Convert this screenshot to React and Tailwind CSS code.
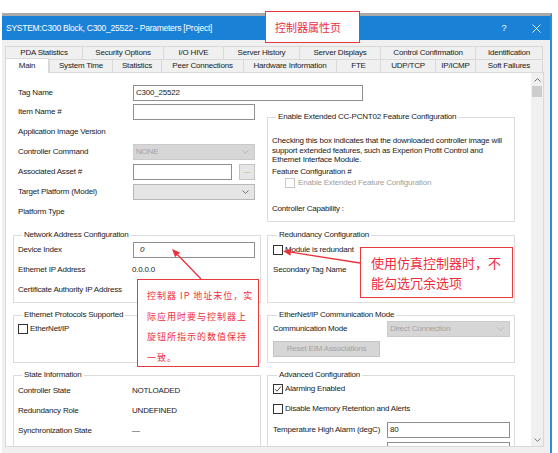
import React from "react";

const Chevron = ({ color = "#a8a8a8" }) => (
  <svg width="7" height="4" viewBox="0 0 7 4" style={{ color }}>
    <path d="M0.5 0.5 L3.5 3.4 L6.5 0.5" fill="none" stroke="currentColor" strokeWidth="0.8" />
  </svg>
);

const ChevronUp = ({ color = "#606060" }) => (
  <svg width="7" height="4" viewBox="0 0 7 4" style={{ color }}>
    <path d="M0.5 3.5 L3.5 0.6 L6.5 3.5" fill="none" stroke="currentColor" strokeWidth="0.9" />
  </svg>
);

function Group({ title, className, children }) {
  return (
    <div className={`border border-[#dcdcdc] ${className}`}>
      <div className="-mt-[6px] ml-[4px] px-[2px] w-fit bg-white leading-[10px] h-[10px] whitespace-nowrap">
        {title}
      </div>
      {children}
    </div>
  );
}

function Box({ w, children, italic }) {
  return (
    <div
      className={`${w} h-[16px] border border-[#8f8f8f] bg-white flex items-center pl-[2px] whitespace-nowrap ${
        italic ? "italic" : ""
      }`}
    >
      {children}
    </div>
  );
}

function Check({ checked, disabled }) {
  return (
    <div
      className={`w-[10px] h-[10px] border bg-white shrink-0 flex items-center justify-center ${
        disabled ? "border-[#c8c8c8]" : "border-[#333333]"
      }`}
    >
      {checked && (
        <svg width="8" height="8" viewBox="0 0 8 8">
          <path d="M1 4.2 L3 6.2 L7 1.5" fill="none" stroke="#333" strokeWidth="0.9" />
        </svg>
      )}
    </div>
  );
}

function Tab({ w, children, last }) {
  return (
    <div
      className={`${w} shrink-0 h-full border-t border-l border-[#d9d9d9] bg-[#f0f0f0] flex items-center justify-center whitespace-nowrap ${
        last ? "border-r" : ""
      }`}
    >
      {children}
    </div>
  );
}

export default function App() {
  return (
    <div className="w-[558px] h-[453px] bg-white relative overflow-hidden font-['Liberation_Sans',Arial,sans-serif] text-[8px] tracking-[-0.2px] text-[#1a1a1a] leading-none">
      <div className="h-[13px]" />
      {/* window */}
      <div className="ml-[2px] w-[550px] h-[440px] border-t-[3px] border-t-[#a9a9a9] border-r-[2px] border-r-[#2a8de0] bg-[#f0f0f0] flex flex-col">
        {/* title bar */}
        <div className="h-[24px] shrink-0 bg-[#1a82d6] flex items-center pl-[4px] text-white">
          <div className="flex-1 text-[8.5px] tracking-[-0.25px] whitespace-nowrap">
            SYSTEM:C300 Block, C300_25522 - Parameters [Project]
          </div>
          <div className="w-[16px] text-center text-[9px]">?</div>
          <div className="w-[16px] ml-[16px] mr-[6px] flex items-center justify-center">
            <svg width="9" height="9" viewBox="0 0 9 9">
              <path d="M0.5 0.5 L8.5 8.5 M8.5 0.5 L0.5 8.5" stroke="white" strokeWidth="0.9" />
            </svg>
          </div>
        </div>

        {/* tab control */}
        <div className="pl-[3px] mt-[6px] flex flex-col flex-1">
          <div className="h-[13px] flex">
            <Tab w="w-[77px]">PDA Statistics</Tab>
            <Tab w="w-[81px]">Security Options</Tab>
            <Tab w="w-[60px]">I/O HIVE</Tab>
            <Tab w="w-[76px]">Server History</Tab>
            <Tab w="w-[81px]">Server Displays</Tab>
            <Tab w="w-[95px]">Control Confirmation</Tab>
            <Tab w="w-[68px]" last>
              Identification
            </Tab>
          </div>
          <div className="h-[13px] flex">
            <div className="w-[44px] shrink-0 -mt-[1px] -mb-[1px] relative z-10 bg-white border-t border-l border-r border-[#d9d9d9] flex items-center justify-center">
              Main
            </div>
            <Tab w="w-[63px]">System Time</Tab>
            <Tab w="w-[49px]">Statistics</Tab>
            <Tab w="w-[82px]">Peer Connections</Tab>
            <Tab w="w-[93px]">Hardware Information</Tab>
            <Tab w="w-[44px]">FTE</Tab>
            <Tab w="w-[55px]">UDP/TCP</Tab>
            <Tab w="w-[40px]">IP/ICMP</Tab>
            <Tab w="w-[68px]" last>
              Soft Failures
            </Tab>
          </div>

          {/* tab page */}
          <div className="w-[539px] h-[375px] border border-[#d9d9d9] bg-white flex overflow-hidden">
            <div className="flex-1 overflow-hidden pl-[7px] pt-[10px]">
              {/* Tag Name */}
              <div className="h-[19px] flex items-center pl-[5px]">
                <div className="w-[115px] shrink-0">Tag Name</div>
                <Box w="w-[230px]">C300_25522</Box>
              </div>

              <div className="grid grid-cols-[248px_248px] gap-x-[6px] gap-y-[12px]">
                {/* Row A left */}
                <div className="pl-[5px] mb-[1px]">
                  <div className="h-[20px] flex items-center">
                    <div className="w-[115px] shrink-0">Item Name #</div>
                    <Box w="w-[122px]" />
                  </div>
                  <div className="h-[20px] flex items-center">Application Image Version</div>
                  <div className="h-[20px] flex items-center">
                    <div className="w-[115px] shrink-0">Controller Command</div>
                    <div className="w-[122px] h-[16px] bg-[#d6d6d6] border border-[#cacaca] flex items-center justify-between pl-[2px] pr-[5px] text-[#a3a3a3]">
                      <span>NONE</span>
                      <Chevron color="#b4b4b4" />
                    </div>
                  </div>
                  <div className="h-[20px] flex items-center">
                    <div className="w-[115px] shrink-0">Associated Asset #</div>
                    <Box w="w-[99px]" />
                    <div className="ml-[7px] w-[16px] h-[16px] bg-[#e6e6e6] border border-[#c4c4c4] flex items-center justify-center text-[#8a8a8a] pb-[3px]">
                      ...
                    </div>
                  </div>
                  <div className="h-[20px] flex items-center">
                    <div className="w-[115px] shrink-0">Target Platform (Model)</div>
                    <div className="w-[122px] h-[16px] bg-[#e5e5e5] border border-[#b8b8b8] flex items-center justify-end pr-[5px]">
                      <Chevron color="#555555" />
                    </div>
                  </div>
                  <div className="h-[20px] flex items-center">Platform Type</div>
                </div>

                {/* Row A right */}
                <Group title="Enable Extended CC-PCNT02 Feature Configuration" className="mt-[15px] h-[105px] mb-[1px] pl-[4px]">
                  <div className="mt-[14px] leading-[9.7px] whitespace-nowrap">
                    Checking this box indicates that the downloaded controller image will
                    <br />
                    support extended features, such as Experion Profit Control and
                    <br />
                    Ethernet Interface Module.
                  </div>
                  <div className="mt-[2px] h-[10px] flex items-center">Feature Configuration #</div>
                  <div className="mt-[1px] h-[10px] flex items-center pl-[13px] text-[#a0a0a0]">
                    <Check disabled />
                    <span className="ml-[3px]">Enable Extended Feature Configuration</span>
                  </div>
                  <div className="mt-[16px] h-[10px] flex items-center">Controller Capability :</div>
                </Group>

                {/* Row B left */}
                <Group title="Network Address Configuration" className="h-[68px] pl-[4px]">
                  <div className="h-[20px] flex items-center">
                    <div className="w-[115px] shrink-0">Device Index</div>
                    <div className="w-[122px] h-[16px] border border-[#8f8f8f] bg-white flex items-center pl-[6px] italic">
                      0
                    </div>
                  </div>
                  <div className="h-[20px] flex items-center">
                    <div className="w-[114px] shrink-0">Ethernet IP Address</div>
                    <span>0.0.0.0</span>
                  </div>
                  <div className="h-[20px] flex items-center">Certificate Authority IP Address</div>
                </Group>

                {/* Row B right */}
                <Group title="Redundancy Configuration" className="h-[68px] pl-[5px]">
                  <div className="h-[20px] flex items-center">
                    <Check />
                    <span className="ml-[2px]">Module is redundant</span>
                  </div>
                  <div className="h-[20px] flex items-center">Secondary Tag Name</div>
                </Group>

                {/* Row C left */}
                <Group title="Ethernet Protocols Supported" className="h-[48px] pl-[4px]">
                  <div className="h-[18px] flex items-center">
                    <Check />
                    <span className="ml-[2px]">EtherNet/IP</span>
                  </div>
                </Group>

                {/* Row C right */}
                <Group title="EtherNet/IP Communication Mode" className="h-[48px] pl-[5px]">
                  <div className="h-[18px] flex items-center">
                    <div className="w-[114px] shrink-0">Communication Mode</div>
                    <div className="w-[123px] h-[16px] bg-[#d6d6d6] border border-[#cacaca] flex items-center justify-between pl-[2px] pr-[5px] text-[#a3a3a3]">
                      <span>Direct Connection</span>
                      <Chevron color="#b4b4b4" />
                    </div>
                  </div>
                  <div className="mt-[3px] w-[107px] h-[16px] bg-[#d6d6d6] border border-[#c4c4c4] flex items-center justify-center text-[#a3a3a3]">
                    Reset EIM Associations
                  </div>
                </Group>

                {/* Row D left */}
                <Group title="State Information" className="h-[100px] pl-[4px]">
                  <div className="pt-[1px]">
                    <div className="h-[20px] flex items-center">
                      <div className="w-[114px] shrink-0">Controller State</div>
                      <span>NOTLOADED</span>
                    </div>
                    <div className="h-[20px] flex items-center">
                      <div className="w-[114px] shrink-0">Redundancy Role</div>
                      <span>UNDEFINED</span>
                    </div>
                    <div className="h-[20px] flex items-center">
                      <div className="w-[114px] shrink-0">Synchronization State</div>
                      <span>—</span>
                    </div>
                    <div className="h-[20px] flex items-center">
                      <div className="w-[114px] shrink-0">Scan Synchronization</div>
                    </div>
                  </div>
                </Group>

                {/* Row D right */}
                <Group title="Advanced Configuration" className="h-[100px] pl-[5px]">
                  <div className="h-[18px] flex items-center">
                    <Check checked />
                    <span className="ml-[2px]">Alarming Enabled</span>
                  </div>
                  <div className="h-[22px] flex items-center">
                    <Check />
                    <span className="ml-[2px]">Disable Memory Retention and Alerts</span>
                  </div>
                  <div className="h-[20px] flex items-center">
                    <div className="w-[114px] shrink-0">Temperature High Alarm (degC)</div>
                    <Box w="w-[123px]">80</Box>
                  </div>
                  <div className="h-[20px] flex items-center">
                    <div className="w-[114px] shrink-0">CPU Free Low Alarm (%)</div>
                    <Box w="w-[123px]">20</Box>
                  </div>
                </Group>
              </div>
            </div>

            {/* scrollbar */}
            <div className="w-[12px] shrink-0 bg-[#f0f0f0] flex flex-col">
              <div className="h-[13px] flex items-center justify-center">
                <ChevronUp />
              </div>
              <div className="h-[11px] mx-[1px] bg-[#cdcdcd]" />
              <div className="flex-1" />
              <div className="h-[13px] flex items-center justify-center">
                <Chevron color="#606060" />
              </div>
            </div>
          </div>
        </div>
      </div>

      {/* annotation overlays */}
      <div className="absolute left-[265px] top-[11px] w-[95px] h-[32px] border-[1.5px] border-[#e8393f] bg-white flex items-center pl-[9px] text-[11px] tracking-normal text-[#ee2d3c] font-['Noto_Sans_CJK_SC',sans-serif]">
        控制器属性页
      </div>

      <div className="absolute left-[137px] top-[279px] w-[122px] h-[88px] border-[1.5px] border-[#e8393f] bg-white pl-[9px] pt-[6px] text-[9px] tracking-[1px] leading-[20.5px] text-[#ee2d3c] font-['Noto_Sans_CJK_SC',sans-serif] whitespace-nowrap">
        控制器 IP 地址末位，实
        <br />
        际应用时要与控制器上
        <br />
        旋钮所指示的数值保持
        <br />
        一致。
      </div>

      <div className="absolute left-[360px] top-[247px] w-[153px] h-[51px] border-[1.5px] border-[#e8393f] bg-white pl-[10px] pt-[5px] text-[13px] tracking-normal leading-[20px] text-[#ee2d3c] font-['Noto_Sans_CJK_SC',sans-serif] whitespace-nowrap">
        使用仿真控制器时，不
        <br />
        能勾选冗余选项
      </div>

      <svg className="absolute inset-0 pointer-events-none" width="558" height="453" viewBox="0 0 558 453">
        <line x1="201" y1="279" x2="177.6" y2="254.8" stroke="#e8333a" strokeWidth="1.3" />
        <polygon points="172,249 180.1,252.4 175.1,257.2" fill="#e8333a" />
        <line x1="360" y1="263" x2="290.9" y2="252.2" stroke="#e8333a" strokeWidth="1.3" />
        <polygon points="283,251 291.4,248.8 290.4,255.7" fill="#e8333a" />
      </svg>
    </div>
  );
}
